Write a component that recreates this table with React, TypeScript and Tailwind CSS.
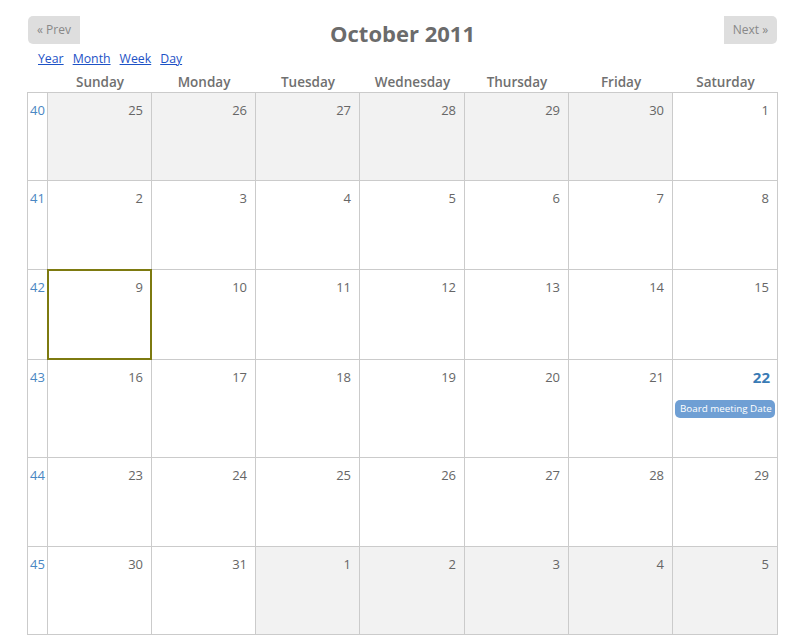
import React from "react";

type Cell = { d: number; other?: boolean; today?: boolean; event?: string };

const weeks: { wk: number; h: string; cells: Cell[] }[] = [
  { wk: 40, h: "h-[88px]", cells: [{ d: 25, other: true }, { d: 26, other: true }, { d: 27, other: true }, { d: 28, other: true }, { d: 29, other: true }, { d: 30, other: true }, { d: 1 }] },
  { wk: 41, h: "h-[89px]", cells: [{ d: 2 }, { d: 3 }, { d: 4 }, { d: 5 }, { d: 6 }, { d: 7 }, { d: 8 }] },
  { wk: 42, h: "h-[90px]", cells: [{ d: 9, today: true }, { d: 10 }, { d: 11 }, { d: 12 }, { d: 13 }, { d: 14 }, { d: 15 }] },
  { wk: 43, h: "h-[98px]", cells: [{ d: 16 }, { d: 17 }, { d: 18 }, { d: 19 }, { d: 20 }, { d: 21 }, { d: 22, event: "Board meeting Date" }] },
  { wk: 44, h: "h-[89px]", cells: [{ d: 23 }, { d: 24 }, { d: 25 }, { d: 26 }, { d: 27 }, { d: 28 }, { d: 29 }] },
  { wk: 45, h: "h-[88px]", cells: [{ d: 30 }, { d: 31 }, { d: 1, other: true }, { d: 2, other: true }, { d: 3, other: true }, { d: 4, other: true }, { d: 5, other: true }] },
];

const days = ["Sunday", "Monday", "Tuesday", "Wednesday", "Thursday", "Friday", "Saturday"];
const grid = "grid grid-cols-[20px_104px_104px_104px_105px_104px_104px_105px]";

export default function App() {
  return (
    <div className="w-[788px] h-[638px] bg-white" style={{ fontFamily: "'Open Sans', 'DejaVu Sans', sans-serif" }}>
      <div className="ml-[27px] w-[751px] pt-[16px]">
        <div className="relative flex items-center justify-between px-[1px] h-[28px]">
          <button className="h-[28px] w-[52px] bg-[#dedede] rounded-l-[5px] text-[12px] text-[#888] flex items-center justify-center">« Prev</button>
          <div className="absolute left-0 right-0 top-[1px] text-center text-[22px] font-bold text-[#6b6b6b] leading-[32px] pointer-events-none">October 2011</div>
          <button className="h-[28px] w-[53px] bg-[#dedede] rounded-r-[5px] text-[12px] text-[#888] flex items-center justify-center">Next »</button>
        </div>
        <div className="flex gap-[9px] pl-[11px] mt-[7px] text-[12.3px] leading-[16px]">
          <a className="text-[#1d52c6] underline" href="#">Year</a>
          <a className="text-[#1d52c6] underline" href="#">Month</a>
          <a className="text-[#1d52c6] underline" href="#">Week</a>
          <a className="text-[#1d52c6] underline" href="#">Day</a>
        </div>
        <div className={`${grid} pl-[1px] mt-[4px] h-[21px] items-center`}>
          <div />
          {days.map((d) => (
            <div key={d} className="text-center text-[13.5px] font-semibold text-[#707070] leading-[18px]">{d}</div>
          ))}
        </div>
        <div className="border-l border-t border-[#cbcbcb]">
          {weeks.map((w) => (
            <div key={w.wk} className={`${grid} ${w.h}`}>
              <div className="border-r border-b border-[#cbcbcb] text-center text-[13px] text-[#4a87c3] pt-[9px] leading-[16px]">{w.wk}</div>
              {w.cells.map((c, i) => (
                <div key={i} className={`relative border-r border-b border-[#cbcbcb] ${c.other ? "bg-[#f2f2f2]" : "bg-white"}`}>
                  {c.event ? (
                    <div className="text-right pr-[7px] pt-[8px] text-[15px] font-bold text-[#3a7bb5] leading-[18px]">{c.d}</div>
                  ) : (
                    <div className="text-right pr-[8px] pt-[9px] text-[13px] text-[#666] leading-[16px]">{c.d}</div>
                  )}
                  {c.event && (
                    <div className="mx-[2px] mt-[14px] h-[18px] rounded-[5px] bg-[#6f9fd4] text-white text-[9.8px] leading-[18px] pl-[5px] whitespace-nowrap overflow-hidden">{c.event}</div>
                  )}
                  {c.today && (
                    <div className="absolute left-[-1px] top-[-1px] right-[-1px] bottom-[-1px] border-2 border-[#7d7a10] pointer-events-none" />
                  )}
                </div>
              ))}
            </div>
          ))}
        </div>
      </div>
    </div>
  );
}
